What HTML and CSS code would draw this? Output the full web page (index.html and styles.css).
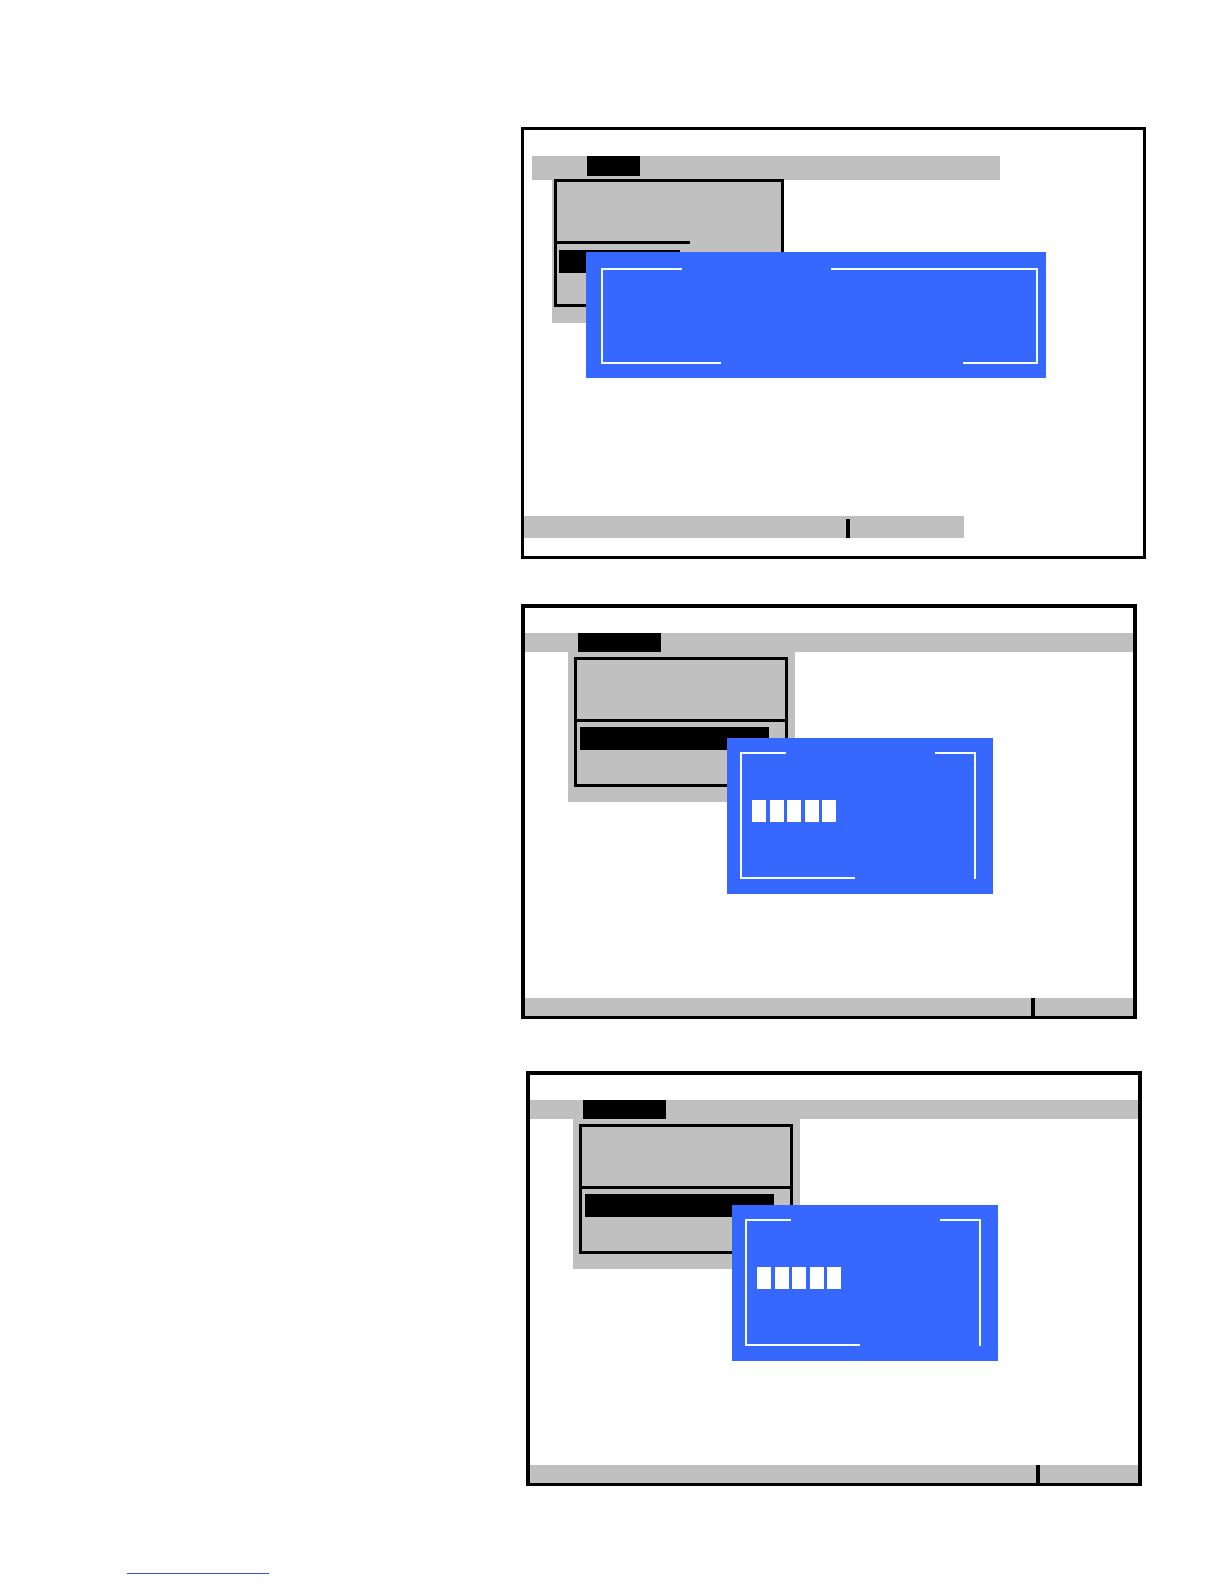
FILE: index.html
```html
<!DOCTYPE html>
<html lang="en">
<head>
<meta charset="utf-8">
<title>Setup screens</title>
<link rel="stylesheet" href="styles.css">
</head>
<body>
<div class="page">

  <div class="screen s1">
    <div class="menubar"><div class="tab"></div></div>
    <div class="dropshadow"></div>
    <div class="menu">
      <div class="menu-rule"></div>
      <div class="menu-item"></div>
    </div>
    <div class="dialog">
      <div class="frame">
        <div class="edge"><i class="seg a"></i><i class="seg b"></i></div>
        <div class="edge bottom"><i class="seg c"></i><i class="seg d"></i></div>
      </div>
    </div>
    <div class="statusbar"><div class="status-left"></div><div class="status-div"></div></div>
  </div>

  <div class="screen s2">
    <div class="menubar"><div class="tab"></div></div>
    <div class="dropshadow"></div>
    <div class="menu">
      <div class="menu-top"></div>
      <div class="menu-item"></div>
    </div>
    <div class="dialog">
      <div class="frame">
        <div class="edge"><i class="seg a"></i><i class="seg b"></i></div>
        <div class="cells"><i class="cell"></i><i class="cell"></i><i class="cell"></i><i class="cell"></i><i class="cell"></i></div>
        <div class="edge bottom"><i class="seg c"></i></div>
      </div>
    </div>
    <div class="statusbar"><div class="status-left"></div><div class="status-div"></div></div>
  </div>

  <div class="screen s3">
    <div class="menubar"><div class="tab"></div></div>
    <div class="dropshadow"></div>
    <div class="menu">
      <div class="menu-top"></div>
      <div class="menu-item"></div>
    </div>
    <div class="dialog">
      <div class="frame">
        <div class="edge"><i class="seg a"></i><i class="seg b"></i></div>
        <div class="cells"><i class="cell"></i><i class="cell"></i><i class="cell"></i><i class="cell"></i><i class="cell"></i></div>
        <div class="edge bottom"><i class="seg c"></i></div>
      </div>
    </div>
    <div class="statusbar"><div class="status-left"></div><div class="status-div"></div></div>
  </div>

  <div class="footnote-rule"></div>
</div>
</body>
</html>
```

FILE: styles.css
```css
* { box-sizing: border-box; }

html, body {
  margin: 0;
  padding: 0;
  background: #ffffff;
  font-family: "Liberation Sans", Arial, sans-serif;
}

.page {
  width: 1224px;
  min-height: 1584px;
  padding-top: 127px;
  display: flex;
  flex-direction: column;
  align-items: flex-start;
}

.screen {
  position: relative;
  display: flex;
  flex-direction: column;
  border: 4px solid #000;
  background: #fff;
}

.menubar {
  background: #c0c0c0;
  display: flex;
}
.tab { background: #000; }

.dropshadow { position: absolute; background: #c0c0c0; }

.menu {
  position: absolute;
  background: #c0c0c0;
  border: 3px solid #000;
  display: flex;
  flex-direction: column;
}
.menu-item { background: #000; }

.dialog {
  position: absolute;
  background: #3667ff;
}
.frame {
  display: flex;
  flex-direction: column;
  border-left: 2px solid #f2ffff;
  border-right: 2px solid #f2ffff;
}
.edge {
  display: flex;
  justify-content: space-between;
  height: 2px;
  margin: 0 -2px;
}
.edge.bottom { margin-top: auto; }
.seg { display: block; height: 2px; background: #f2ffff; }

.cells { display: flex; gap: 3.5px; }
.cell { display: block; width: 14px; height: 22px; background: #ffffff; }

.statusbar {
  margin-top: auto;
  background: #c0c0c0;
  display: flex;
  align-items: flex-end;
}
.status-div { background: #000; }

/* ---------- screen 1 ---------- */
.s1 {
  margin-left: 521px;
  width: 625px;
  height: 432px;
  border-width: 3px;
}
.s1 .menubar { margin: 26px 0 0 8px; width: 468px; height: 24px; }
.s1 .tab { margin-left: 55px; width: 53px; height: 20px; }
.s1 .dropshadow { left: 28px; top: 49px; width: 230px; height: 144px; }
.s1 .menu { left: 30px; top: 49px; width: 230px; height: 128px; }
.s1 .menu-rule { margin: 59px 0 0 -1px; width: 134px; height: 3px; background: #000; }
.s1 .menu-item { margin: 6px 0 0 2px; width: 121px; height: 23px; }
.s1 .dialog { left: 62px; top: 122px; width: 460px; height: 126px; padding: 16px 0 0 15px; }
.s1 .frame { width: 437px; height: 96px; }
.s1 .seg.a { width: 81px; }
.s1 .seg.b { width: 207px; }
.s1 .seg.c { width: 120px; }
.s1 .seg.d { width: 75px; }
.s1 .statusbar { margin-bottom: 18px; width: 440px; height: 22px; }
.s1 .status-left { width: 322px; }
.s1 .status-div { width: 4px; height: 19px; }

/* ---------- screens 2 and 3 ---------- */
.s2, .s3 { width: 616px; height: 415px; }
.s2 { margin-left: 521px; margin-top: 45px; }
.s3 { margin-left: 526px; margin-top: 52px; }

.s2 .menubar, .s3 .menubar { margin-top: 25px; width: 100%; height: 19px; }
.s2 .tab, .s3 .tab { margin-left: 53px; width: 83px; height: 20px; }
.s2 .dropshadow, .s3 .dropshadow { left: 43px; top: 44px; width: 227px; height: 150px; }
.s2 .menu, .s3 .menu { left: 49px; top: 49px; width: 214px; height: 130px; }
.s2 .menu-top, .s3 .menu-top { height: 62px; border-bottom: 3px solid #000; }
.s2 .menu-item, .s3 .menu-item { margin: 5px 0 0 3px; width: 189px; height: 23px; }
.s2 .dialog, .s3 .dialog { left: 202px; top: 130px; width: 266px; height: 156px; padding: 14px 0 0 13px; }
.s2 .frame, .s3 .frame { width: 236px; height: 127px; }
.s2 .seg.a, .s3 .seg.a { width: 46px; }
.s2 .seg.b, .s3 .seg.b { width: 41px; }
.s2 .seg.c, .s3 .seg.c { width: 115px; }
.s2 .cells, .s3 .cells { margin: 46px 0 0 10px; }
.s2 .statusbar, .s3 .statusbar { width: 100%; height: 18px; margin-bottom: -1px; }
.s2 .status-left, .s3 .status-left { width: 506px; }
.s2 .status-div, .s3 .status-div { width: 4px; height: 18px; }

.footnote-rule {
  margin-top: 87px;
  margin-left: 127px;
  width: 142px;
  height: 1px;
  background: #2f56c9;
}
```
